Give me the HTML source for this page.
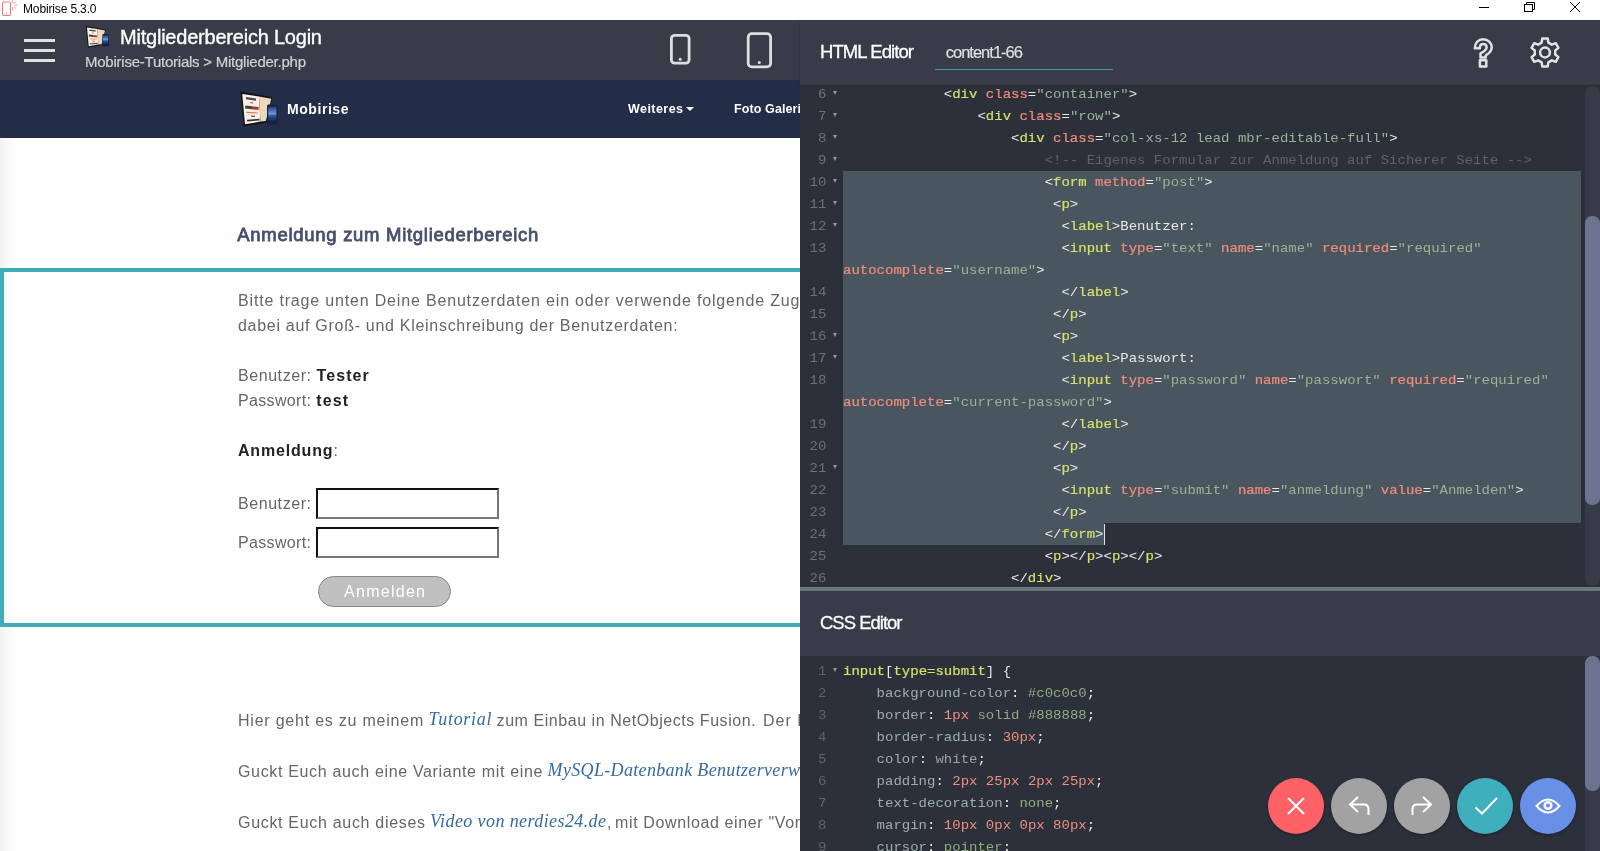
<!DOCTYPE html>
<html lang="de">
<head>
<meta charset="utf-8">
<title>Mobirise 5.3.0</title>
<style>
*{box-sizing:border-box;margin:0;padding:0}
html,body{width:1600px;height:851px;overflow:hidden;background:#fff}
body{position:relative;font-family:"Liberation Sans",sans-serif;color:#fff}
.abs{position:absolute}
#root{position:absolute;left:0;top:0;width:1600px;height:851px;overflow:hidden;will-change:transform}
.t{position:absolute;white-space:pre}
#titlebar{left:0;top:0;width:1600px;height:20px;background:#fff;overflow:hidden}
#left{left:0;top:20px;width:800px;height:831px;overflow:hidden;background:#fff}
#topbar{left:0;top:0;width:800px;height:60px;background:#383c49}
#nav{left:0;top:60px;width:800px;height:58px;background:#222c49}
#panel{left:800px;top:20px;width:800px;height:831px;background:#2c303b;overflow:hidden}
#hhead{left:0;top:0;width:800px;height:64px;background:#383c49}
#chead{left:0;top:571px;width:800px;height:65px;background:#383c49}

.cl{font-family:"Liberation Mono",monospace;font-size:14px;line-height:22px;white-space:pre;position:absolute;left:43px;color:#e8e8e8;height:22px;transform:scaleY(.88);transform-origin:0 15px}
.ln{font-family:"Liberation Mono",monospace;font-size:14px;line-height:22px;position:absolute;left:0;width:26.300px;text-align:right;color:#6b6f7b;height:22px;transform:scaleY(.88);transform-origin:0 15px}
.fold{position:absolute;width:0;height:0;border-left:2.600px solid transparent;border-right:2.600px solid transparent;border-top:4.200px solid #9396a0}
.tg{color:#d9de6a;-webkit-text-stroke:.25px #d9de6a}
.at{color:#ee8b7b;-webkit-text-stroke:.25px #ee8b7b}
.st{color:#9ab394}
.cm{color:#5d616d}
.pr{color:#9eaeaa}
.nu{color:#ee8f7d}
.gr{color:#93aa7c}
.wh{color:#a59ba9}
.sel{position:absolute;background:#49565f}
.circ{position:absolute;width:56px;height:56px;border-radius:50%;top:758px}
.track{position:absolute;left:785px;width:15px;background:#373b47;border-radius:7px}
.thumb{position:absolute;left:785px;width:15px;background:#6b748f;border-radius:7px}
</style>
</head>
<body>
<div id="root">
<div id="titlebar" class="abs"></div>
<svg class="abs" style="left:0;top:0" width="24" height="20" viewBox="0 0 24 20">
<rect x="2.500" y="2" width="8" height="13.500" rx="1.500" fill="none" stroke="#ee7a80" stroke-width="1.100"/>
<circle cx="6.500" cy="13.200" r="0.600" fill="#e8555d"/>
<g stroke="#f08a8f" stroke-width="0.900" fill="none"><path d="M12.700 0v3.400M12.700 7v3.400M14.400 5.200h3M13.900 3.800l2.200-2.200M13.900 6.600l2.200 2.200"/></g>
</svg>
<div class="t" style="left:23.00px;top:1.04px;font-size:12px;line-height:16px;color:#000;letter-spacing:-0.144px;">Mobirise 5.3.0</div>
<svg class="abs" style="left:1470px;top:0" width="130" height="20" viewBox="0 0 130 20">
<g fill="none" stroke="#000" stroke-width="1">
<path d="M9 7.5h10"/>
<rect x="54.500" y="4.500" width="8" height="7"/>
<path d="M56.5 4.5v-2h8v7h-2"/>
<path d="M100 2l10 10M110 2l-10 10"/>
</g></svg>
<div class="abs" style="left:0;top:20px;width:800px;height:60px;background:#383c49"></div>
<div class="abs" style="left:24.200px;top:39px;width:31.300px;height:3px;background:#dfdfe4"></div>
<div class="abs" style="left:24.200px;top:49px;width:31.300px;height:3px;background:#dfdfe4"></div>
<div class="abs" style="left:24.200px;top:59px;width:31.300px;height:3px;background:#dfdfe4"></div>
<svg class="abs" style="left:85.4px;top:25.4px" width="24.800" height="23.560" viewBox="0 0 40 38"><defs><linearGradient id="lg1" x1="0" y1="0" x2="0" y2="1"><stop offset="0" stop-color="#1f3f86"/><stop offset=".5" stop-color="#6f9bd6"/><stop offset=".62" stop-color="#2c56a4"/><stop offset="1" stop-color="#14264f"/></linearGradient></defs>
<path d="M1.3 1.500L33.300 7.300 27.500 32.500 4.800 36.500z" fill="#15110f"/>
<path d="M3.200 3.900L20 6.600 21.500 31.600 6 34.300z" fill="#fbefe8"/>
<path d="M20 6.600L32.300 8.700 26.800 31 21.500 31.600z" fill="#ead9bc"/>
<path d="M7 8.200L17 9.700" stroke="#4a4a4e" stroke-width="2.200" fill="none"/>
<path d="M11 12.600L14.300 13" stroke="#666" stroke-width="1" fill="none"/>
<path d="M6.200 17L13 17.700" stroke="#3f4a2c" stroke-width="3" fill="none"/>
<path d="M13 17.700L19.600 18.500" stroke="#b8342b" stroke-width="3" fill="none"/>
<path d="M7.200 22.300L19 23" stroke="#e08446" stroke-width="1.200" fill="none"/>
<path d="M12 26.200L16 26.400" stroke="#555" stroke-width="1.200" fill="none"/>
<path d="M8 30.600L20.500 29.600" stroke="#333" stroke-width="1.600" fill="none"/>
<rect x="28" y="14.500" width="10.600" height="20" rx="1.500" fill="#16213d"/>
<rect x="29.200" y="16.600" width="8.200" height="14.600" fill="url(#lg1)"/></svg>
<div class="t" style="left:120.00px;top:24.07px;font-size:20px;line-height:26px;color:#fff;letter-spacing:-0.218px;-webkit-text-stroke:.35px #fff;">Mitgliederbereich Login</div>
<div class="t" style="left:85.00px;top:51.80px;font-size:15px;line-height:20px;color:#d2d2d6;letter-spacing:-0.239px;-webkit-text-stroke:.2px #d2d2d6;">Mobirise-Tutorials &gt; Mitglieder.php</div>
<svg class="abs" style="left:660px;top:25px" width="125" height="50" viewBox="0 0 125 50">
<g fill="none" stroke="#dddee3" stroke-width="2.8">
<rect x="11.4" y="10.4" width="17.7" height="27.8" rx="3.2"/>
<rect x="88.2" y="8.6" width="22.4" height="33.2" rx="3.6"/>
</g>
<circle cx="20.2" cy="34.2" r="1.5" fill="#dddee3"/>
<circle cx="99.3" cy="37.6" r="1.5" fill="#dddee3"/>
</svg>
<div class="abs" style="left:0;top:80px;width:800px;height:57.5px;background:#242d47"></div>
<svg class="abs" style="left:239px;top:89.5px" width="40" height="38" viewBox="0 0 40 38"><defs><linearGradient id="lg2" x1="0" y1="0" x2="0" y2="1"><stop offset="0" stop-color="#1f3f86"/><stop offset=".5" stop-color="#6f9bd6"/><stop offset=".62" stop-color="#2c56a4"/><stop offset="1" stop-color="#14264f"/></linearGradient></defs>
<path d="M1.3 1.500L33.300 7.300 27.500 32.500 4.800 36.500z" fill="#15110f"/>
<path d="M3.200 3.900L20 6.600 21.500 31.600 6 34.300z" fill="#fbefe8"/>
<path d="M20 6.600L32.300 8.700 26.800 31 21.500 31.600z" fill="#ead9bc"/>
<path d="M7 8.200L17 9.700" stroke="#4a4a4e" stroke-width="2.200" fill="none"/>
<path d="M11 12.600L14.300 13" stroke="#666" stroke-width="1" fill="none"/>
<path d="M6.200 17L13 17.700" stroke="#3f4a2c" stroke-width="3" fill="none"/>
<path d="M13 17.700L19.600 18.500" stroke="#b8342b" stroke-width="3" fill="none"/>
<path d="M7.200 22.300L19 23" stroke="#e08446" stroke-width="1.200" fill="none"/>
<path d="M12 26.200L16 26.400" stroke="#555" stroke-width="1.200" fill="none"/>
<path d="M8 30.600L20.500 29.600" stroke="#333" stroke-width="1.600" fill="none"/>
<rect x="28" y="14.500" width="10.600" height="20" rx="1.500" fill="#16213d"/>
<rect x="29.200" y="16.600" width="8.200" height="14.600" fill="url(#lg2)"/></svg>
<div class="t" style="left:287.00px;top:100.15px;font-size:14px;line-height:18px;color:#fff;font-weight:bold;letter-spacing:0.560px;">Mobirise</div>
<div class="t" style="left:628.00px;top:100.67px;font-size:12.5px;line-height:16px;color:#fff;font-weight:bold;letter-spacing:0.444px;">Weiteres</div>
<div class="abs" style="left:686px;top:106.5px;width:0;height:0;border-left:4.5px solid transparent;border-right:4.5px solid transparent;border-top:4.5px solid #fff"></div>
<div class="t" style="left:734.00px;top:100.67px;font-size:12.5px;line-height:16px;color:#fff;font-weight:bold;letter-spacing:0.102px;">Foto Galerie</div>
<div class="abs" style="left:0;top:137.5px;width:16px;height:714px;background:linear-gradient(90deg,#f1f1f3,#f8f8f9 40%,#fff)"></div>
<div class="t" style="left:237.30px;top:222.99px;font-size:18.5px;line-height:24px;color:#47506c;letter-spacing:0.710px;-webkit-text-stroke:.8px #47506c;">Anmeldung zum Mitgliederbereich</div>
<div class="abs" style="left:0;top:268px;width:900px;height:358.800px;background:#41abb8"></div>
<div class="abs" style="left:4px;top:272px;width:900px;height:351px;background:linear-gradient(90deg,#f7f7f8,#fff 12px)"></div>
<div class="t" style="left:238.00px;top:289.96px;font-size:16px;line-height:21px;color:#666;letter-spacing:0.826px;">Bitte trage unten Deine Benutzerdaten ein oder verwende folgende Zug</div>
<div class="t" style="left:238.00px;top:314.96px;font-size:16px;line-height:21px;color:#666;letter-spacing:0.709px;">dabei auf Groß- und Kleinschreibung der Benutzerdaten:</div>
<div class="t" style="left:238.00px;top:364.96px;font-size:16px;line-height:21px;color:#666;letter-spacing:0.564px;">Benutzer:</div>
<div class="t" style="left:316.50px;top:364.96px;font-size:16px;line-height:21px;color:#232323;font-weight:bold;letter-spacing:1.091px;">Tester</div>
<div class="t" style="left:238.00px;top:389.96px;font-size:16px;line-height:21px;color:#666;letter-spacing:0.344px;">Passwort:</div>
<div class="t" style="left:316.30px;top:389.96px;font-size:16px;line-height:21px;color:#232323;font-weight:bold;letter-spacing:1.082px;">test</div>
<div class="t" style="left:238.00px;top:439.96px;font-size:16px;line-height:21px;color:#232323;font-weight:bold;letter-spacing:0.812px;">Anmeldung</div>
<div class="t" style="left:333.50px;top:439.96px;font-size:16px;line-height:21px;color:#666;">:</div>
<div class="t" style="left:238.00px;top:492.96px;font-size:16px;line-height:21px;color:#666;letter-spacing:0.564px;">Benutzer:</div>
<div class="t" style="left:238.00px;top:531.96px;font-size:16px;line-height:21px;color:#666;letter-spacing:0.344px;">Passwort:</div>
<div class="abs" style="left:316px;top:488px;width:183px;height:30.5px;background:#fff;border:2px solid #767676;border-top-color:#111;border-left-color:#111"></div>
<div class="abs" style="left:316px;top:527px;width:183px;height:30.5px;background:#fff;border:2px solid #767676;border-top-color:#111;border-left-color:#111"></div>
<div class="abs" style="left:318px;top:576px;width:133px;height:30.5px;background:#c0c0c0;border:1px solid #888;border-radius:16px"></div>
<div class="t" style="left:344.00px;top:580.96px;font-size:16px;line-height:21px;color:#fff;letter-spacing:1.279px;">Anmelden</div>
<div class="t" style="left:238.00px;top:709.96px;font-size:16px;line-height:21px;color:#666;letter-spacing:0.778px;">Hier geht es zu meinem</div>
<div class="t" style="left:428.50px;top:708.42px;font-size:18px;line-height:23px;color:#356ba3;font-family:'Liberation Serif',serif;font-style:italic;letter-spacing:0.710px;">Tutorial</div>
<div class="t" style="left:496.60px;top:709.96px;font-size:16px;line-height:21px;color:#666;letter-spacing:0.552px;">zum Einbau in NetObjects Fusion.</div>
<div class="t" style="left:763.00px;top:709.96px;font-size:16px;line-height:21px;color:#666;letter-spacing:1.000px;">Der E</div>
<div class="t" style="left:238.00px;top:760.96px;font-size:16px;line-height:21px;color:#666;letter-spacing:0.663px;">Guckt Euch auch eine Variante mit eine</div>
<div class="t" style="left:547.60px;top:759.42px;font-size:18px;line-height:23px;color:#356ba3;font-family:'Liberation Serif',serif;font-style:italic;letter-spacing:0.331px;">MySQL-Datenbank Benutzerverw</div>
<div class="t" style="left:238.00px;top:811.96px;font-size:16px;line-height:21px;color:#666;letter-spacing:0.688px;">Guckt Euch auch dieses</div>
<div class="t" style="left:430.00px;top:810.42px;font-size:18px;line-height:23px;color:#356ba3;font-family:'Liberation Serif',serif;font-style:italic;letter-spacing:0.407px;">Video von nerdies24.de</div>
<div class="t" style="left:607.00px;top:811.96px;font-size:16px;line-height:21px;color:#666;">,</div>
<div class="t" style="left:615.00px;top:811.96px;font-size:16px;line-height:21px;color:#666;letter-spacing:0.632px;">mit Download einer &quot;Vor</div>
<div class="abs" style="left:800px;top:20px;width:800px;height:831px;background:#2c303b"></div>
<div class="sel" style="left:843px;top:171px;width:738px;height:352px"></div>
<div class="sel" style="left:843px;top:523px;width:261px;height:22px"></div>
<div class="abs" style="left:1103.5px;top:524px;width:1px;height:21px;background:#dfe3e8"></div>
<div class="ln" style="left:800px;top:83px">6</div>
<div class="fold" style="left:832.8px;top:91.2px"></div>
<div class="cl" style="left:843px;top:83px">            &lt;<span class="tg">div</span> <span class="at">class</span>=<span class="st">&quot;container&quot;</span>&gt;</div>
<div class="ln" style="left:800px;top:105px">7</div>
<div class="fold" style="left:832.8px;top:113.2px"></div>
<div class="cl" style="left:843px;top:105px">                &lt;<span class="tg">div</span> <span class="at">class</span>=<span class="st">&quot;row&quot;</span>&gt;</div>
<div class="ln" style="left:800px;top:127px">8</div>
<div class="fold" style="left:832.8px;top:135.2px"></div>
<div class="cl" style="left:843px;top:127px">                    &lt;<span class="tg">div</span> <span class="at">class</span>=<span class="st">&quot;col-xs-12 lead mbr-editable-full&quot;</span>&gt;</div>
<div class="ln" style="left:800px;top:149px">9</div>
<div class="fold" style="left:832.8px;top:157.2px"></div>
<div class="cl" style="left:843px;top:149px">                        <span class="cm">&lt;!-- Eigenes Formular zur Anmeldung auf Sicherer Seite --&gt;</span></div>
<div class="ln" style="left:800px;top:171px">10</div>
<div class="fold" style="left:832.8px;top:179.2px"></div>
<div class="cl" style="left:843px;top:171px">                        &lt;<span class="tg">form</span> <span class="at">method</span>=<span class="st">&quot;post&quot;</span>&gt;</div>
<div class="ln" style="left:800px;top:193px">11</div>
<div class="fold" style="left:832.8px;top:201.2px"></div>
<div class="cl" style="left:843px;top:193px">                         &lt;<span class="tg">p</span>&gt;</div>
<div class="ln" style="left:800px;top:215px">12</div>
<div class="fold" style="left:832.8px;top:223.2px"></div>
<div class="cl" style="left:843px;top:215px">                          &lt;<span class="tg">label</span>&gt;Benutzer:</div>
<div class="ln" style="left:800px;top:237px">13</div>
<div class="cl" style="left:843px;top:237px">                          &lt;<span class="tg">input</span> <span class="at">type</span>=<span class="st">&quot;text&quot;</span> <span class="at">name</span>=<span class="st">&quot;name&quot;</span> <span class="at">required</span>=<span class="st">&quot;required&quot;</span></div>
<div class="cl" style="left:843px;top:259px"><span class="at">autocomplete</span>=<span class="st">&quot;username&quot;</span>&gt;</div>
<div class="ln" style="left:800px;top:281px">14</div>
<div class="cl" style="left:843px;top:281px">                          &lt;/<span class="tg">label</span>&gt;</div>
<div class="ln" style="left:800px;top:303px">15</div>
<div class="cl" style="left:843px;top:303px">                         &lt;/<span class="tg">p</span>&gt;</div>
<div class="ln" style="left:800px;top:325px">16</div>
<div class="fold" style="left:832.8px;top:333.2px"></div>
<div class="cl" style="left:843px;top:325px">                         &lt;<span class="tg">p</span>&gt;</div>
<div class="ln" style="left:800px;top:347px">17</div>
<div class="fold" style="left:832.8px;top:355.2px"></div>
<div class="cl" style="left:843px;top:347px">                          &lt;<span class="tg">label</span>&gt;Passwort:</div>
<div class="ln" style="left:800px;top:369px">18</div>
<div class="cl" style="left:843px;top:369px">                          &lt;<span class="tg">input</span> <span class="at">type</span>=<span class="st">&quot;password&quot;</span> <span class="at">name</span>=<span class="st">&quot;passwort&quot;</span> <span class="at">required</span>=<span class="st">&quot;required&quot;</span></div>
<div class="cl" style="left:843px;top:391px"><span class="at">autocomplete</span>=<span class="st">&quot;current-password&quot;</span>&gt;</div>
<div class="ln" style="left:800px;top:413px">19</div>
<div class="cl" style="left:843px;top:413px">                          &lt;/<span class="tg">label</span>&gt;</div>
<div class="ln" style="left:800px;top:435px">20</div>
<div class="cl" style="left:843px;top:435px">                         &lt;/<span class="tg">p</span>&gt;</div>
<div class="ln" style="left:800px;top:457px">21</div>
<div class="fold" style="left:832.8px;top:465.2px"></div>
<div class="cl" style="left:843px;top:457px">                         &lt;<span class="tg">p</span>&gt;</div>
<div class="ln" style="left:800px;top:479px">22</div>
<div class="cl" style="left:843px;top:479px">                          &lt;<span class="tg">input</span> <span class="at">type</span>=<span class="st">&quot;submit&quot;</span> <span class="at">name</span>=<span class="st">&quot;anmeldung&quot;</span> <span class="at">value</span>=<span class="st">&quot;Anmelden&quot;</span>&gt;</div>
<div class="ln" style="left:800px;top:501px">23</div>
<div class="cl" style="left:843px;top:501px">                         &lt;/<span class="tg">p</span>&gt;</div>
<div class="ln" style="left:800px;top:523px">24</div>
<div class="cl" style="left:843px;top:523px">                        &lt;/<span class="tg">form</span>&gt;</div>
<div class="ln" style="left:800px;top:545px">25</div>
<div class="cl" style="left:843px;top:545px">                        &lt;<span class="tg">p</span>&gt;&lt;/<span class="tg">p</span>&gt;&lt;<span class="tg">p</span>&gt;&lt;/<span class="tg">p</span>&gt;</div>
<div class="ln" style="left:800px;top:567px">26</div>
<div class="cl" style="left:843px;top:567px">                    &lt;/<span class="tg">div</span>&gt;</div>
<div class="abs" style="left:800px;top:20px;width:800px;height:65.300px;background:#383c49;box-shadow:0 1px 1.500px rgba(34,37,47,.6)"></div>
<div class="t" style="left:820.00px;top:39.79px;font-size:18.5px;line-height:24px;color:#fff;letter-spacing:-0.916px;-webkit-text-stroke:.3px #fff;">HTML Editor</div>
<div class="t" style="left:945.70px;top:42.28px;font-size:16.5px;line-height:21px;color:#dedfe2;letter-spacing:-0.986px;-webkit-text-stroke:.2px #dedfe2;">content1-66</div>
<div class="abs" style="left:935px;top:69px;width:178px;height:1.300px;background:#3a9ca8"></div>
<svg class="abs" style="left:1465px;top:30px" width="110" height="46" viewBox="0 0 110 46">
<g fill="none" stroke="#e1e2e6" stroke-width="2.5" stroke-linejoin="round">
<path d="M9.8 18.3 C9.8 12.8 13.3 9.3 18.1 9.3 C23 9.3 26.7 12.7 26.7 17.3 C26.7 21.2 24.5 23.3 20.8 25.4 L20.8 27.4 L15.5 27.4 L15.500 23.300 C19.500 21.400 21.600 20.200 21.600 17.500 C21.600 15.400 20.200 14.100 18.100 14.100 C16.100 14.100 14.800 15.600 14.800 18.300 Z"/>
<rect x="14.900" y="30.300" width="6.400" height="6.200"/>
<circle cx="80" cy="22.500" r="4.900"/>
<path d="M83.39 12.67 L82.71 8.56 L77.29 8.56 L76.61 12.67 L73.18 14.65 L69.28 13.18 L66.57 17.88 L69.79 20.52 L69.79 24.48 L66.57 27.12 L69.28 31.82 L73.18 30.35 L76.61 32.33 L77.29 36.44 L82.71 36.44 L83.39 32.33 L86.82 30.35 L90.72 31.82 L93.43 27.12 L90.21 24.48 L90.21 20.52 L93.43 17.88 L90.72 13.18 L86.82 14.65Z"/>
</g></svg>
<div class="track" style="left:1585px;top:85.5px;height:500px"></div>
<div class="thumb" style="left:1585px;top:215.5px;height:289.500px"></div>
<div class="abs" style="left:800px;top:586.5px;width:800px;height:4.500px;background:#6b767e"></div>
<div class="abs" style="left:800px;top:591px;width:800px;height:65px;background:#383c49"></div>
<div class="abs" style="left:800px;top:656px;width:800px;height:195px;background:#2c303b"></div>
<div class="t" style="left:820.00px;top:611.29px;font-size:18.5px;line-height:24px;color:#fff;letter-spacing:-1.002px;-webkit-text-stroke:.3px #fff;">CSS Editor</div>
<div class="ln" style="left:800px;top:660px;color:#5f6370">1</div>
<div class="fold" style="left:832.8px;top:668.2px"></div>
<div class="cl" style="left:843px;top:660px"><span class="tg">input</span>[<span class="tg">type=submit</span>] {</div>
<div class="ln" style="left:800px;top:682px;color:#5f6370">2</div>
<div class="cl" style="left:843px;top:682px">    <span class="pr">background-color</span>: <span class="gr">#c0c0c0</span>;</div>
<div class="ln" style="left:800px;top:704px;color:#5f6370">3</div>
<div class="cl" style="left:843px;top:704px">    <span class="pr">border</span>: <span class="nu">1px</span> <span class="gr">solid</span> <span class="gr">#888888</span>;</div>
<div class="ln" style="left:800px;top:726px;color:#5f6370">4</div>
<div class="cl" style="left:843px;top:726px">    <span class="pr">border-radius</span>: <span class="nu">30px</span>;</div>
<div class="ln" style="left:800px;top:748px;color:#5f6370">5</div>
<div class="cl" style="left:843px;top:748px">    <span class="pr">color</span>: <span class="wh">white</span>;</div>
<div class="ln" style="left:800px;top:770px;color:#5f6370">6</div>
<div class="cl" style="left:843px;top:770px">    <span class="pr">padding</span>: <span class="nu">2px</span> <span class="nu">25px</span> <span class="nu">2px</span> <span class="nu">25px</span>;</div>
<div class="ln" style="left:800px;top:792px;color:#5f6370">7</div>
<div class="cl" style="left:843px;top:792px">    <span class="pr">text-decoration</span>: <span class="gr">none</span>;</div>
<div class="ln" style="left:800px;top:814px;color:#5f6370">8</div>
<div class="cl" style="left:843px;top:814px">    <span class="pr">margin</span>: <span class="nu">10px</span> <span class="nu">0px</span> <span class="nu">0px</span> <span class="nu">80px</span>;</div>
<div class="ln" style="left:800px;top:836px;color:#5f6370">9</div>
<div class="cl" style="left:843px;top:836px">    <span class="pr">cursor</span>: <span class="gr">pointer</span>;</div>
<div class="track" style="left:1585px;top:656px;height:220px"></div>
<div class="thumb" style="left:1585px;top:656px;height:135px"></div>
<div class="circ" style="left:1268px;top:778px;background:#ff6266;box-shadow:0 1px 3px rgba(0,0,0,.35)"></div>
<svg class="abs" style="left:1268px;top:778px" width="56" height="56" viewBox="0 0 56 56"><g fill="none" stroke="#fff" stroke-width="2" stroke-linecap="butt"><path d="M20 20l16 16M36 20l-16 16"/></g></svg>
<div class="circ" style="left:1331px;top:778px;background:#a2a2a2;box-shadow:0 1px 3px rgba(0,0,0,.35)"></div>
<svg class="abs" style="left:1331px;top:778px" width="56" height="56" viewBox="0 0 56 56"><g fill="none" stroke="#fff" stroke-width="2" stroke-linecap="butt"><path d="M27 19l-8 7.500 8 7.500M19.500 26.500h13.500q4.500 0 4.500 4.500v6"/></g></svg>
<div class="circ" style="left:1394px;top:778px;background:#a2a2a2;box-shadow:0 1px 3px rgba(0,0,0,.35)"></div>
<svg class="abs" style="left:1394px;top:778px" width="56" height="56" viewBox="0 0 56 56"><g fill="none" stroke="#fff" stroke-width="2" stroke-linecap="butt"><path d="M29 19l8 7.500-8 7.500M36.500 26.500h-13.500q-4.500 0-4.500 4.500v6"/></g></svg>
<div class="circ" style="left:1457px;top:778px;background:#3fafbd;box-shadow:0 1px 3px rgba(0,0,0,.35)"></div>
<svg class="abs" style="left:1457px;top:778px" width="56" height="56" viewBox="0 0 56 56"><g fill="none" stroke="#fff" stroke-width="2" stroke-linecap="butt"><path d="M18.500 29.500l6.500 6 15-15.500"/></g></svg>
<div class="circ" style="left:1520px;top:778px;background:#6790e6;box-shadow:0 1px 3px rgba(0,0,0,.35)"></div>
<svg class="abs" style="left:1520px;top:778px" width="56" height="56" viewBox="0 0 56 56"><g fill="none" stroke="#fff" stroke-width="2" stroke-linecap="butt"><path d="M16.500 28q11.500-13 23 0q-11.500 13-23 0z"/><circle cx="28" cy="27.500" r="3.300" stroke-width="2.600"/></g></svg>
</div>
</body>
</html>
